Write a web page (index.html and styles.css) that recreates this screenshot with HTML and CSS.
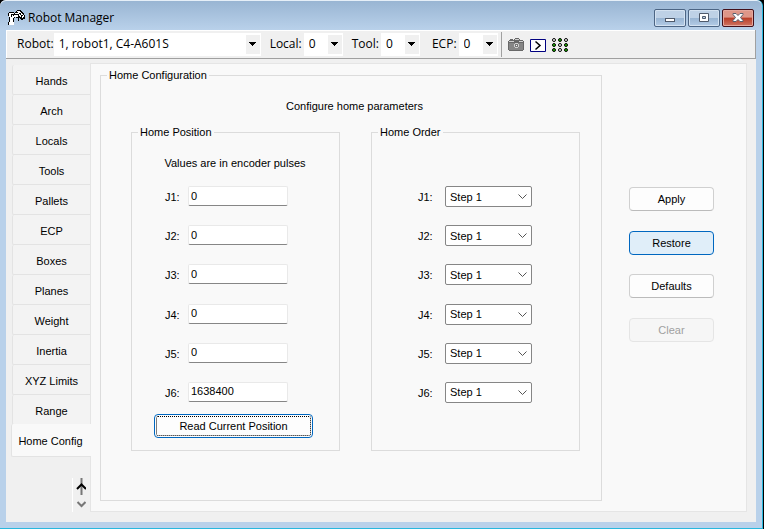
FILE: index.html
```html
<!DOCTYPE html>
<html lang="en">
<head>
<meta charset="utf-8">
<title>Robot Manager</title>
<link rel="stylesheet" href="styles.css">
</head>
<body>
<div class="window">
  <header class="titlebar">
    <svg class="app-icon" viewBox="0 0 17 17" width="17" height="17" shape-rendering="crispEdges" aria-hidden="true">
      <path d="M0 3h1v-1h5v1h1v-1h1v-1h1v-1h4v1h1v1h1v1h1v2h1v4h-2v1h-2v-1h-1v-1h-1v3h-1v-3h-2v-1h-1v1h-1v7h-6v-3h1v-6h-1z" fill="#000"/>
      <path d="M1 3h5v1h-5zM1 4h2v3h-2zM2 7h3v5h-3zM1 12h5v3h-5zM4 5h1v1h1v2h-2zM9 1h3v1h-3zM7 3h4v1h-4zM10 2h3v1h-3zM6 5h4v2h-4zM11 4h1v2h-1zM13 3h1v1h1v1h-2zM12 5h1v2h-1zM15 5h1v2h-1zM14 6h1v2h-1z" fill="#fff"/>
    </svg>
    <h1 class="title">Robot Manager</h1>
    <div class="window-buttons">
      <button class="win-btn" type="button" aria-label="Minimize">
        <svg viewBox="0 0 12 10" width="12" height="10"><rect x="1.500" y="5.500" width="9" height="3" fill="#fff" stroke="#4f5a6b"/></svg>
      </button>
      <button class="win-btn" type="button" aria-label="Maximize">
        <svg viewBox="0 0 12 10" width="12" height="10"><path fill-rule="evenodd" d="M1.500 .5h9v8h-9zM4.500 3.500h3v2h-3z" fill="#fff" stroke="#4f5a6b"/></svg>
      </button>
      <button class="win-btn win-close" type="button" aria-label="Close">
        <svg viewBox="0 0 12 10" width="12" height="10"><path d="M1 .5h3l2 2 2-2h3v1l-2.500 3 2.500 3v1h-3l-2-2-2 2h-3v-1l2.500-3-2.500-3z" fill="#fff" stroke="#58606f"/></svg>
      </button>
    </div>
  </header>
  <div class="client">
    <div class="toolbar">
      <label class="tool-label" for="robot">Robot:</label>
      <select class="tool-select robot-select" id="robot"><option>1, robot1, C4-A601S</option></select>
      <label class="tool-label" for="local">Local:</label>
      <select class="tool-select" id="local"><option>0</option></select>
      <label class="tool-label" for="tool">Tool:</label>
      <select class="tool-select" id="tool"><option>0</option></select>
      <label class="tool-label ecp-label" for="ecp">ECP:</label>
      <select class="tool-select" id="ecp"><option>0</option></select>
      <div class="tool-icons">
        <button class="icon-btn" type="button" aria-label="Camera">
          <svg viewBox="0 0 16 16" width="16" height="16" shape-rendering="crispEdges"><path d="M2 2h3v1h1v-1h1v-1h4v1h1v1h3v1h1v9h-1v1h-14v-1h-1v-9h1v-1h1z" fill="#686868"/><path d="M7 2h4v1h-4zM1 4h5v1h-5zM11 4h4v1h-4z" fill="#d0d0d0"/><path d="M1 6h14v7h-14z" fill="#868686"/><path d="M7 6h3v1h1v3h-1v1h-3v-1h-1v-3h1z" fill="#d0d0d0"/><path d="M7 7h3v3h-3z" fill="#777"/><path d="M8 8h1v1h-1z" fill="#fff"/></svg>
        </button>
        <button class="icon-btn" type="button" aria-label="Command window">
          <svg viewBox="0 0 16 16" width="16" height="16"><path d="M.5 2.500h15v12h-15z" fill="#fff" stroke="#000080"/><path d="M5.500 4.500l4.500 4-4.500 4" fill="none" stroke="#000" stroke-width="1.500"/></svg>
        </button>
        <button class="icon-btn" type="button" aria-label="Input and output monitor">
          <svg viewBox="0 0 16 16" width="16" height="16" stroke="#000"><g fill="#fff"><circle cx="2" cy="3" r="1.500"/><circle cx="14" cy="3" r="1.500"/><circle cx="8" cy="8" r="1.500"/><circle cx="8" cy="13" r="1.500"/></g><g fill="#20c000"><circle cx="8" cy="3" r="1.500"/><circle cx="2" cy="8" r="1.500"/><circle cx="14" cy="8" r="1.500"/><circle cx="2" cy="13" r="1.500"/><circle cx="14" cy="13" r="1.500"/></g></svg>
        </button>
      </div>
    </div>
    <div class="workspace">
      <nav class="sidebar" aria-label="Pages">
        <button class="tab" type="button">Hands</button>
        <button class="tab" type="button">Arch</button>
        <button class="tab" type="button">Locals</button>
        <button class="tab" type="button">Tools</button>
        <button class="tab" type="button">Pallets</button>
        <button class="tab" type="button">ECP</button>
        <button class="tab" type="button">Boxes</button>
        <button class="tab" type="button">Planes</button>
        <button class="tab" type="button">Weight</button>
        <button class="tab" type="button">Inertia</button>
        <button class="tab" type="button">XYZ Limits</button>
        <button class="tab" type="button">Range</button>
        <button class="tab tab-active" type="button">Home Config</button>
        <div class="scroller">
          <button class="scroll-btn" type="button" aria-label="Scroll up"><svg viewBox="0 0 10 17" width="10" height="17" fill="none"><path d="M5.500 0v17" stroke="#777" stroke-width="2"/><path d="M1 11l4.500-4.500L10 11" stroke="#000" stroke-width="2"/></svg></button>
          <button class="scroll-btn" type="button" aria-label="Scroll down"><svg viewBox="0 0 10 17" width="10" height="17" fill="none"><path d="M1.500 7l4 4 4-4" stroke="#777" stroke-width="2"/></svg></button>
        </div>
      </nav>
      <main class="page">
        <fieldset class="group config">
          <legend>Home Configuration</legend>
          <p class="lead">Configure home parameters</p>
          <div class="columns">
            <fieldset class="group column">
              <legend>Home Position</legend>
              <p class="hint">Values are in encoder pulses</p>
              <div class="rows">
                <div class="row"><label for="p1">J1:</label><input class="pulse" id="p1" type="text" value="0"></div>
                <div class="row"><label for="p2">J2:</label><input class="pulse" id="p2" type="text" value="0"></div>
                <div class="row"><label for="p3">J3:</label><input class="pulse" id="p3" type="text" value="0"></div>
                <div class="row"><label for="p4">J4:</label><input class="pulse" id="p4" type="text" value="0"></div>
                <div class="row"><label for="p5">J5:</label><input class="pulse" id="p5" type="text" value="0"></div>
                <div class="row"><label for="p6">J6:</label><input class="pulse" id="p6" type="text" value="1638400"></div>
              </div>
              <button class="btn btn-read" type="button">Read Current Position</button>
            </fieldset>
            <fieldset class="group column order">
              <legend>Home Order</legend>
              <div class="rows">
                <div class="row"><label for="o1">J1:</label><select class="step" id="o1"><option>Step 1</option></select></div>
                <div class="row"><label for="o2">J2:</label><select class="step" id="o2"><option>Step 1</option></select></div>
                <div class="row"><label for="o3">J3:</label><select class="step" id="o3"><option>Step 1</option></select></div>
                <div class="row"><label for="o4">J4:</label><select class="step" id="o4"><option>Step 1</option></select></div>
                <div class="row"><label for="o5">J5:</label><select class="step" id="o5"><option>Step 1</option></select></div>
                <div class="row"><label for="o6">J6:</label><select class="step" id="o6"><option>Step 1</option></select></div>
              </div>
            </fieldset>
          </div>
        </fieldset>
        <div class="actions">
          <button class="btn" type="button">Apply</button>
          <button class="btn btn-hot" type="button">Restore</button>
          <button class="btn" type="button">Defaults</button>
          <button class="btn" type="button" disabled>Clear</button>
        </div>
      </main>
    </div>
  </div>
</div>
</body>
</html>
```
FILE: styles.css
```css
* { box-sizing: border-box; }

body {
  margin: 0;
  background: #000;
  color: #000;
  font: 11px/14px "Liberation Sans", sans-serif;
}

button, input, select { font: inherit; color: inherit; }
p, h1 { margin: 0; font-weight: normal; }
svg { display: block; }

.window {
  display: flex;
  flex-direction: column;
  min-height: calc(100vh - 1px);
  margin-right: 1px;
  padding: 0 6px 6px;
  border: solid #29b8de;
  border-width: 0 1px 1px 0;
  border-radius: 6px 6px 0 0;
  box-shadow: inset 0 1px #e6eff8;
  background: linear-gradient(#98b4d2, #b9d1ea 30px, #b9d1ea);
}

.titlebar {
  display: flex;
  align-items: center;
  height: 30px;
  padding: 8px 2px 2px;
}

.title {
  flex: 1;
  margin-left: 3px;
  font: 12px/16px "Open Sans", sans-serif;
}

.window-buttons { display: flex; gap: 2px; }

.win-btn {
  display: flex;
  align-items: center;
  justify-content: center;
  width: 32px;
  height: 18px;
  padding: 0;
  border: 1px solid #4c6584;
  border-radius: 2px;
  box-shadow: inset 0 0 0 1px #d4e2f1;
  background: linear-gradient(#bed1e6 50%, #98b4d2 50%, #b4cce6);
}

.win-close {
  border-color: #43101a;
  box-shadow: inset 0 0 0 1px #e5a79d;
  background: linear-gradient(#de9688 45%, #b93c26 50%, #cf7563);
}

.client {
  display: flex;
  flex: 1;
  flex-direction: column;
  background: #f0f0f0;
}

.toolbar {
  display: flex;
  align-items: center;
  height: 29px;
  padding-left: 11px;
  border: solid #a0a0a0;
  border-width: 0 1px 1px 0;
  box-shadow: inset 1px 1px #fff;
  font: 12px/16px "Open Sans", sans-serif;
}

.tool-label { margin: 0 2px 0 9px; }
.tool-label:first-child { margin: 0; }
.ecp-label { margin-left: 12px; }

.tool-select {
  appearance: none;
  width: 39px;
  height: 23px;
  padding: 0 0 0 4px;
  border: 1px solid #fff;
  border-radius: 0;
  background:
    conic-gradient(from -45deg at 50% 100%, #000 90deg, transparent 0) right 4px center / 7px 4px no-repeat,
    linear-gradient(#f0f0f0, #f0f0f0) right 0 top 1px / 14px 19px no-repeat,
    #fff;
  /* The triangle points down: its tip sits on the bottom edge. */
}

.robot-select { width: 207px; }

.tool-icons {
  display: flex;
  align-items: center;
  align-self: stretch;
  gap: 6px;
  margin: 2px 0 1px 3px;
  padding-left: 6px;
  border-left: 1px solid #a0a0a0;
}

.icon-btn, .scroll-btn {
  padding: 0;
  border: 0;
  background: none;
}

.workspace {
  display: flex;
  flex: 1;
  padding: 4px 9px 10px 5px;
}

.sidebar {
  display: flex;
  flex-direction: column;
  width: 80px;
  margin-right: -1px;
  padding-top: 2px;
  z-index: 1;
}

.tab {
  height: 30px;
  margin: 0 1px;
  padding: 2px 0 0;
  border: 1px solid #e3e3e3;
  border-width: 0 0 1px 1px;
  border-radius: 2px 0 0 2px;
  background: #f3f3f3;
}

.tab-active {
  height: 33px;
  margin: -1px 0 0;
  padding-right: 2px;
  border-right: 0;
  background: #f9f9f9;
}

.scroller {
  display: flex;
  flex-direction: column;
  align-self: flex-end;
  margin: 21px 1px 0 0;
  padding: 0 4px 0 3px;
  border-left: 1px solid #fff;
}

.page {
  display: flex;
  flex: 1;
  align-items: flex-start;
  padding: 4px 32px 9px 9px;
  border: 1px solid #e5e5e5;
  background: #f9f9f9;
}

.group {
  min-width: 0;
  margin: 0;
  padding: 0;
  border: 1px solid #dcdcdc;
}

.group > legend {
  margin-left: 6px;
  padding: 0 2px;
}

.config { flex: 1; }

.lead { margin: 17px 0 12px; padding-left: 7px; text-align: center; }

.columns {
  display: flex;
  gap: 31px;
  padding: 0 21px 49px 30px;
}

.column { flex: 1; padding-bottom: 12px; }

.hint { margin-top: 17px; padding-right: 1px; text-align: center; }

.rows {
  display: flex;
  flex-direction: column;
  justify-content: space-between;
  height: 217px;
  margin: 16px 0 11px 33px;
}

.order .rows { margin: 47px 0 0 46px; }

.row { display: flex; align-items: flex-start; }
.row label { width: 23px; padding-top: 4px; }
.order .row label { width: 27px; }

.pulse {
  width: 100px;
  height: 20px;
  margin-bottom: 1px;
  padding: 0 2px 1px;
  border: 1px solid #e9e9e9;
  border-bottom-color: #868686;
  border-radius: 2px;
  background: #fff;
}

.step {
  appearance: none;
  width: 87px;
  height: 21px;
  padding: 0 4px;
  border: 1px solid #868686;
  border-radius: 2px;
  background: #fff url("data:image/svg+xml,%3Csvg xmlns='http://www.w3.org/2000/svg' width='9' height='5'%3E%3Cpath d='M.5.5l4 4 4-4' fill='none' stroke='%23555'/%3E%3C/svg%3E") right 4px center no-repeat;
}

.btn {
  display: block;
  height: 24px;
  padding: 0;
  border: 1px solid #d0d0d0;
  border-bottom-color: #bbb;
  border-radius: 4px;
  background: #fdfdfd;
}

.btn-read {
  width: 159px;
  margin-left: 22px;
  border-color: #0067c0;
  outline: 1px dotted #000;
  outline-offset: -3px;
}

.btn-hot { border-color: #0067c0; background: #e0eef9; }
.btn:disabled { border-color: #e5e5e5; background: #f6f6f6; color: #a0a0a0; }

.actions {
  display: flex;
  flex-direction: column;
  justify-content: space-between;
  width: 85px;
  height: 155px;
  margin: 119px 0 0 27px;
}
```
